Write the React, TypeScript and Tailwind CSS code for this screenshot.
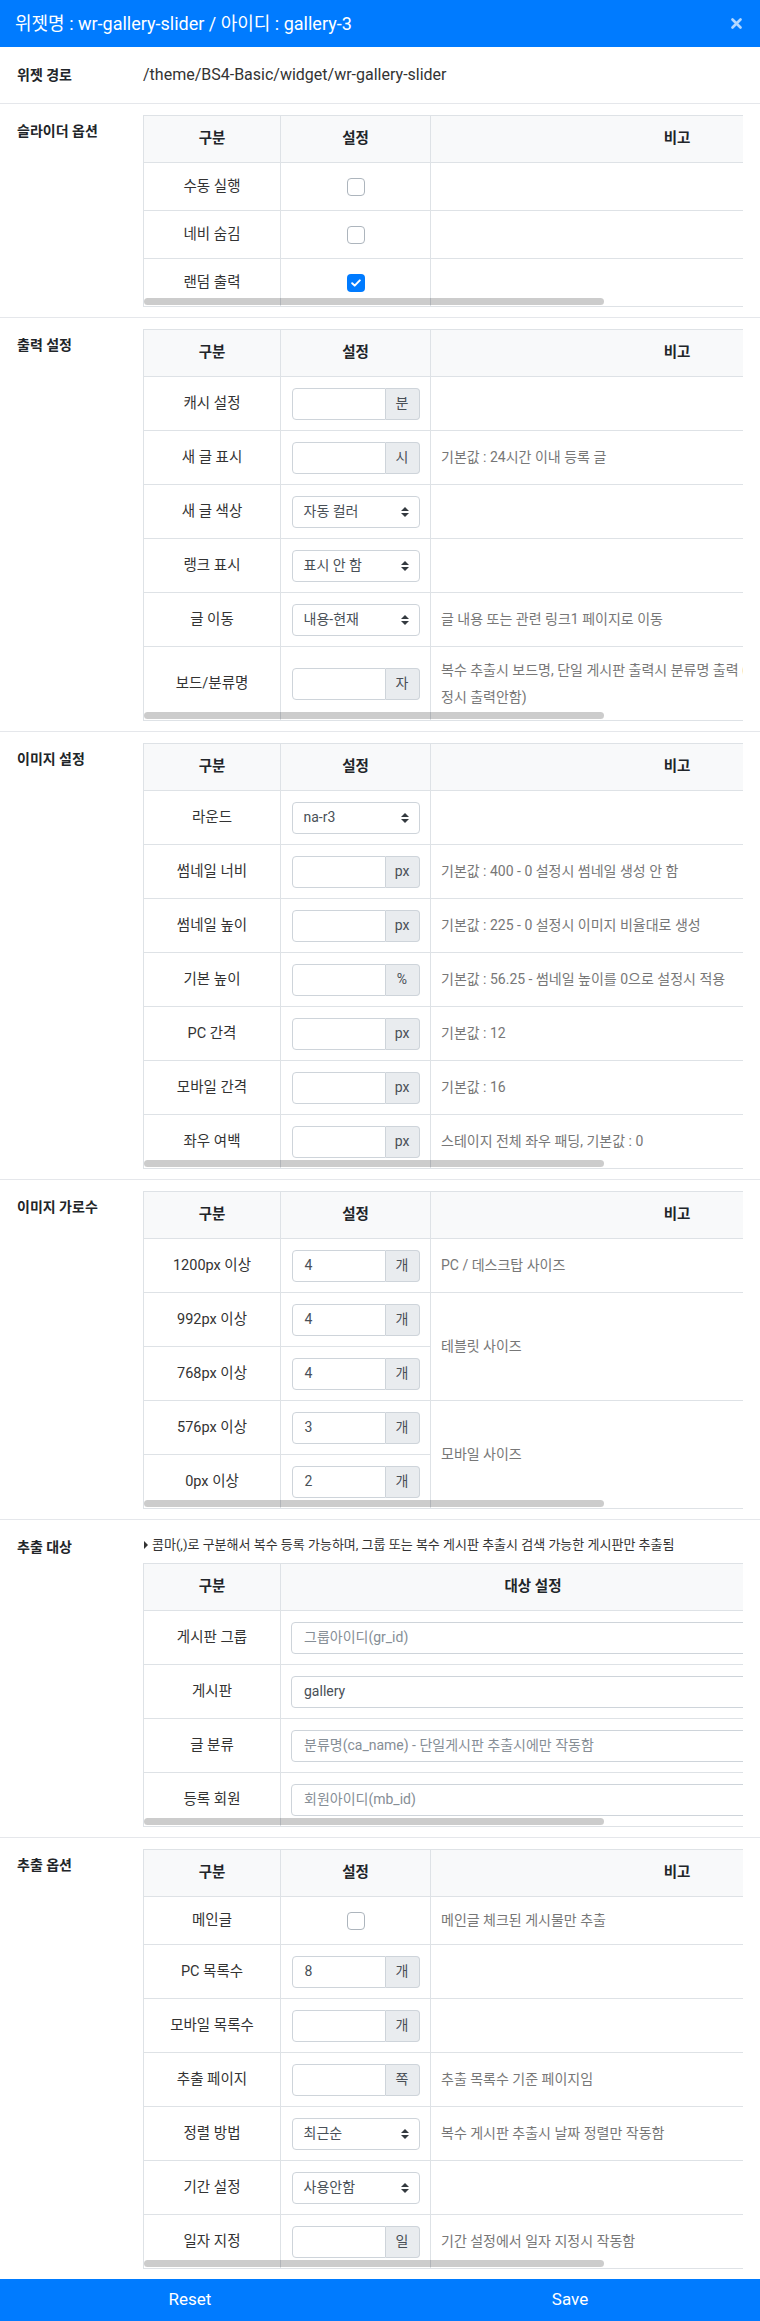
import React from "react";

type Note = React.ReactNode;

function Check({ checked }: { checked?: boolean }) {
  return checked ? (
    <div className="w-[18px] h-[18px] rounded-[4px] bg-[#007bff] flex items-center justify-center">
      <svg width="10" height="8" viewBox="0 0 10 8">
        <path d="M1.2 4.2 3.7 6.6 8.8 1.4" fill="none" stroke="#fff" strokeWidth="2" strokeLinecap="round" strokeLinejoin="round" />
      </svg>
    </div>
  ) : (
    <div className="w-[18px] h-[18px] rounded-[4px] border border-[#adb5bd] bg-white" />
  );
}

function Addon({ value, unit }: { value?: string; unit: string }) {
  return (
    <div className="flex w-[128px] h-[32px] text-[14px]">
      <div className="flex-1 flex items-center px-[12px] border border-[#ced4da] rounded-l-[4px] text-[#495057] bg-white">{value}</div>
      <div className="w-[34px] flex items-center justify-center border border-l-0 border-[#ced4da] rounded-r-[4px] bg-[#e9ecef] text-[#495057]">{unit}</div>
    </div>
  );
}

function Select({ value }: { value: string }) {
  return (
    <div className="flex items-center justify-between w-[128px] h-[32px] pl-[11px] pr-[10px] border border-[#ced4da] rounded-[4px] bg-white text-[#495057] text-[14px]">
      <span>{value}</span>
      <svg width="8" height="10" viewBox="0 0 4 5">
        <path d="M2 0L0 2h4zm0 5L0 3h4z" fill="#343a40" />
      </svg>
    </div>
  );
}

function HeadRow({ third = "비고" }: { third?: string }) {
  return (
    <div className="flex h-[47px] border-b border-[#dee2e6] bg-[#f8f9fa] font-bold text-[#212529] text-[14.5px]">
      <div className="w-[137px] flex items-center justify-center border-r border-[#dee2e6]">구분</div>
      <div className="w-[150px] flex items-center justify-center border-r border-[#dee2e6]">설정</div>
      <div className="w-[493px] flex items-center justify-center border-r border-[#dee2e6]">{third}</div>
    </div>
  );
}

function Row({ h, label, setting, note }: { h: string; label: string; setting: React.ReactNode; note?: Note }) {
  return (
    <div className={`flex border-b border-[#dee2e6] ${h}`}>
      <div className="w-[137px] flex items-center justify-center border-r border-[#dee2e6] text-[#333] text-[14.5px]">{label}</div>
      <div className="w-[150px] flex items-center justify-center border-r border-[#dee2e6]">{setting}</div>
      <div className="w-[493px] flex items-center px-[10px] border-r border-[#dee2e6] text-[#777] text-[14px] leading-[27px]">{note}</div>
    </div>
  );
}

function TableBox({ children }: { children: React.ReactNode }) {
  return (
    <div className="relative w-[600px] overflow-hidden border-t border-l border-[#dee2e6]">
      <div className="w-[780px]">{children}</div>
      <div className="absolute left-0 bottom-[2px] h-[7px] w-[460px] rounded-full bg-black/20" />
    </div>
  );
}

function Section({ label, children }: { label: string; children: React.ReactNode }) {
  return (
    <div className="flex border-t border-[#e5e7eb] pt-[11px] pb-[10px]">
      <div className="w-[143px] pl-[17px] pt-[5px] leading-[22px] text-[14px] font-bold text-[#212529]">{label}</div>
      <div className="w-[600px]">{children}</div>
    </div>
  );
}

function TextInput({ value, placeholder }: { value?: string; placeholder?: string }) {
  return (
    <div className="flex items-center w-[484px] h-[32px] px-[12px] border border-[#ced4da] rounded-[4px] bg-white text-[14px]">
      {value ? <span className="text-[#495057]">{value}</span> : <span className="text-[#868e96]">{placeholder}</span>}
    </div>
  );
}

function TargetRow({ label, value, placeholder }: { label: string; value?: string; placeholder?: string }) {
  return (
    <div className="flex h-[54px] border-b border-[#dee2e6]">
      <div className="w-[137px] flex items-center justify-center border-r border-[#dee2e6] text-[#333] text-[14.5px]">{label}</div>
      <div className="w-[643px] flex items-center pl-[10px] border-r border-[#dee2e6]">
        <TextInput value={value} placeholder={placeholder} />
      </div>
    </div>
  );
}

function ColRow({ label, value }: { label: string; value: string }) {
  return (
    <div className="flex h-[54px] border-b border-[#dee2e6]">
      <div className="w-[137px] flex items-center justify-center border-r border-[#dee2e6] text-[#333] text-[14.5px]">{label}</div>
      <div className="w-[150px] flex items-center justify-center border-r border-[#dee2e6]">
        <Addon value={value} unit="개" />
      </div>
    </div>
  );
}

export default function App() {
  return (
    <div className="w-[760px] bg-white [font-family:Roboto,'Noto_Sans_CJK_KR',sans-serif]">
      <div className="h-[47px] bg-[#007bff] flex items-center justify-between pl-[15px] pr-[18px]">
        <div className="text-white text-[18px]">위젯명 : wr-gallery-slider / 아이디 : gallery-3</div>
        <svg width="11" height="11" viewBox="0 0 11 11">
          <path d="M1.5 1.5l8 8M9.5 1.5l-8 8" stroke="#ffffff" strokeOpacity="0.7" strokeWidth="2.6" strokeLinecap="round" />
        </svg>
      </div>

      <div className="flex items-center h-[56px]">
        <div className="w-[143px] pl-[17px] text-[14px] font-bold text-[#212529]">위젯 경로</div>
        <div className="text-[16px] text-[#333]">/theme/BS4-Basic/widget/wr-gallery-slider</div>
      </div>

      <Section label="슬라이더 옵션">
        <TableBox>
          <HeadRow />
          <Row h="h-[48px]" label="수동 실행" setting={<Check />} />
          <Row h="h-[48px]" label="네비 숨김" setting={<Check />} />
          <Row h="h-[48px]" label="랜덤 출력" setting={<Check checked />} />
        </TableBox>
      </Section>

      <Section label="출력 설정">
        <TableBox>
          <HeadRow />
          <Row h="h-[54px]" label="캐시 설정" setting={<Addon unit="분" />} />
          <Row h="h-[54px]" label="새 글 표시" setting={<Addon unit="시" />} note="기본값 : 24시간 이내 등록 글" />
          <Row h="h-[54px]" label="새 글 색상" setting={<Select value="자동 컬러" />} />
          <Row h="h-[54px]" label="랭크 표시" setting={<Select value="표시 안 함" />} />
          <Row h="h-[54px]" label="글 이동" setting={<Select value="내용-현재" />} note="글 내용 또는 관련 링크1 페이지로 이동" />
          <Row
            h="h-[74px]"
            label="보드/분류명"
            setting={<Addon unit="자" />}
            note={
              <span>
                복수 추출시 보드명, 단일 게시판 출력시 분류명 출력 (분류 지
                <br />
                정시 출력안함)
              </span>
            }
          />
        </TableBox>
      </Section>

      <Section label="이미지 설정">
        <TableBox>
          <HeadRow />
          <Row h="h-[54px]" label="라운드" setting={<Select value="na-r3" />} />
          <Row h="h-[54px]" label="썸네일 너비" setting={<Addon unit="px" />} note="기본값 : 400 - 0 설정시 썸네일 생성 안 함" />
          <Row h="h-[54px]" label="썸네일 높이" setting={<Addon unit="px" />} note="기본값 : 225 - 0 설정시 이미지 비율대로 생성" />
          <Row h="h-[54px]" label="기본 높이" setting={<Addon unit="%" />} note="기본값 : 56.25 - 썸네일 높이를 0으로 설정시 적용" />
          <Row h="h-[54px]" label="PC 간격" setting={<Addon unit="px" />} note="기본값 : 12" />
          <Row h="h-[54px]" label="모바일 간격" setting={<Addon unit="px" />} note="기본값 : 16" />
          <Row h="h-[54px]" label="좌우 여백" setting={<Addon unit="px" />} note="스테이지 전체 좌우 패딩, 기본값 : 0" />
        </TableBox>
      </Section>

      <Section label="이미지 가로수">
        <TableBox>
          <HeadRow />
          <div className="flex">
            <div className="flex flex-col">
              <ColRow label="1200px 이상" value="4" />
              <ColRow label="992px 이상" value="4" />
              <ColRow label="768px 이상" value="4" />
              <ColRow label="576px 이상" value="3" />
              <ColRow label="0px 이상" value="2" />
            </div>
            <div className="flex flex-col w-[493px] text-[#777] text-[14px]">
              <div className="h-[54px] flex items-center px-[10px] border-b border-r border-[#dee2e6]">PC / 데스크탑 사이즈</div>
              <div className="h-[108px] flex items-center px-[10px] border-b border-r border-[#dee2e6]">테블릿 사이즈</div>
              <div className="h-[108px] flex items-center px-[10px] border-b border-r border-[#dee2e6]">모바일 사이즈</div>
            </div>
          </div>
        </TableBox>
      </Section>

      <Section label="추출 대상">
        <div className="h-[32px] leading-[28px] text-[13px] text-[#333] flex items-start">
          <svg width="6" height="28" viewBox="0 0 6 28" className="mr-[3px]">
            <path d="M1 10l4 4-4 4z" fill="#333" />
          </svg>
          <span>콤마(,)로 구분해서 복수 등록 가능하며, 그룹 또는 복수 게시판 추출시 검색 가능한 게시판만 추출됨</span>
        </div>
        <TableBox>
          <div className="flex h-[47px] border-b border-[#dee2e6] bg-[#f8f9fa] font-bold text-[#212529] text-[14.5px]">
            <div className="w-[137px] flex items-center justify-center border-r border-[#dee2e6]">구분</div>
            <div className="w-[643px] flex items-center border-r border-[#dee2e6]">
              <div className="w-[504px] text-center">대상 설정</div>
            </div>
          </div>
          <TargetRow label="게시판 그룹" placeholder="그룹아이디(gr_id)" />
          <TargetRow label="게시판" value="gallery" />
          <TargetRow label="글 분류" placeholder="분류명(ca_name) - 단일게시판 추출시에만 작동함" />
          <TargetRow label="등록 회원" placeholder="회원아이디(mb_id)" />
        </TableBox>
      </Section>

      <Section label="추출 옵션">
        <TableBox>
          <HeadRow />
          <Row h="h-[48px]" label="메인글" setting={<Check />} note="메인글 체크된 게시물만 추출" />
          <Row h="h-[54px]" label="PC 목록수" setting={<Addon value="8" unit="개" />} />
          <Row h="h-[54px]" label="모바일 목록수" setting={<Addon unit="개" />} />
          <Row h="h-[54px]" label="추출 페이지" setting={<Addon unit="쪽" />} note="추출 목록수 기준 페이지임" />
          <Row h="h-[54px]" label="정렬 방법" setting={<Select value="최근순" />} note="복수 게시판 추출시 날짜 정렬만 작동함" />
          <Row h="h-[54px]" label="기간 설정" setting={<Select value="사용안함" />} />
          <Row h="h-[54px]" label="일자 지정" setting={<Addon unit="일" />} note="기간 설정에서 일자 지정시 작동함" />
        </TableBox>
      </Section>

      <div className="flex h-[42px] bg-[#007bff] text-white text-[17px]">
        <div className="flex-1 flex items-center justify-center">Reset</div>
        <div className="flex-1 flex items-center justify-center">Save</div>
      </div>
    </div>
  );
}
